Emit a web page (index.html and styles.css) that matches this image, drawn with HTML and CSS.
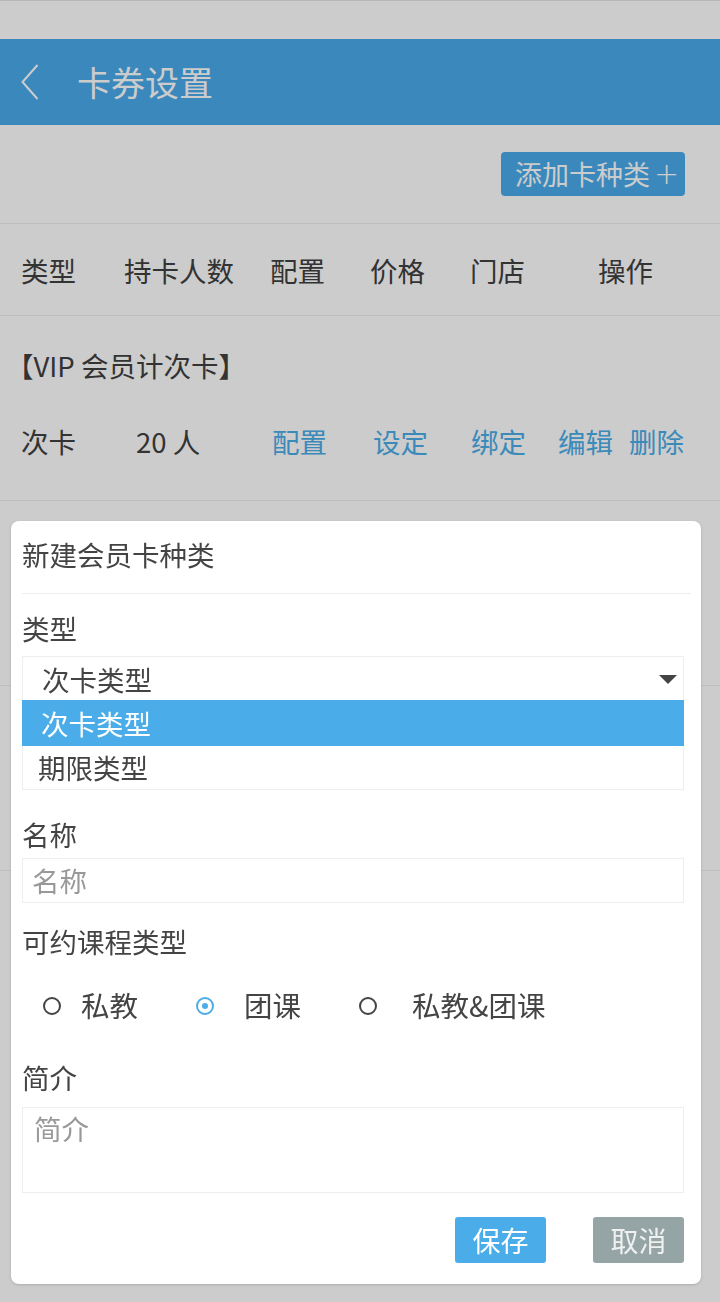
FILE: index.html
```html
<!DOCTYPE html>
<html lang="zh-CN">
<head>
<meta charset="utf-8">
<title>卡券设置</title>
<link rel="stylesheet" href="styles.css">
</head>
<body>
<div class="page">
  <div class="statusbar"></div>
  <header class="navbar">
    <svg class="back" width="18" height="36" viewBox="0 0 18 36"><polyline points="16.5,1 1.5,18 16.5,35" fill="none" stroke="#fff" stroke-width="2"/></svg>
    <h1 class="title">卡券设置</h1>
  </header>
  <div class="toolbar"><button class="btn-add">添加卡种类<span class="plus">+</span></button></div>
  <div class="thead">
    <span>类型</span><span>持卡人数</span><span>配置</span><span>价格</span><span>门店</span><span>操作</span>
  </div>
  <section class="group">
    <div class="group-title">【VIP 会员计次卡】</div>
    <div class="group-row">
      <span>次卡</span><span>20 人</span><a class="link">配置</a><a class="link">设定</a><a class="link">绑定</a><a class="link">编辑</a><a class="link">删除</a>
    </div>
  </section>
  <section class="group"></section>
  <section class="group"></section>
</div>
<div class="mask"></div>
<div class="modal">
  <div class="modal-head">新建会员卡种类</div>
  <div class="modal-body">
    <div class="label label-type">类型</div>
    <div class="select">
      <div class="select-value"><span>次卡类型</span><i class="caret"></i></div>
      <ul class="options">
        <li class="option active">次卡类型</li>
        <li class="option">期限类型</li>
      </ul>
    </div>
    <div class="label label-name">名称</div>
    <div class="input placeholder">名称</div>
    <div class="label label-course">可约课程类型</div>
    <div class="radios">
      <span class="radio r1"><i class="dot"></i><span>私教</span></span>
      <span class="radio r2 checked"><i class="dot"></i><span>团课</span></span>
      <span class="radio r3"><i class="dot"></i><span>私教&amp;团课</span></span>
    </div>
    <div class="label label-intro">简介</div>
    <div class="textarea placeholder">简介</div>
    <div class="actions">
      <button class="btn btn-save">保存</button>
      <button class="btn btn-cancel">取消</button>
    </div>
  </div>
</div>
</body>
</html>
```

FILE: styles.css
```css
* { box-sizing: border-box; }
html, body {
  margin: 0;
  padding: 0;
  background: #fff;
  font-family: "Noto Sans CJK SC", "Noto Sans", sans-serif;
  color: #404040;
}
.page {
  width: 720px;
  min-height: 1302px;
  background: #fff;
}
.statusbar {
  height: 39px;
  border-top: 1px solid #e6e6e6;
  background: #fff;
}
.navbar {
  height: 86px;
  background: #49abeb;
  display: flex;
  align-items: center;
  padding-left: 21px;
}
.back { display: block; }
.title {
  margin: 0 0 0 38px;
  font-weight: normal;
  font-size: 34px;
  color: #fff;
  line-height: 40px;
}
.toolbar {
  height: 99px;
  border-bottom: 1px solid #efefef;
  display: flex;
  justify-content: flex-end;
  align-items: flex-start;
  padding: 27px 35px 0 0;
}
.btn-add {
  height: 44px;
  width: 184px;
  border: 0;
  border-radius: 4px;
  background: #49abeb;
  color: #fff;
  font-family: inherit;
  font-size: 27px;
  line-height: 44px;
  padding: 0 0 0 14px;
  text-align: left;
  white-space: nowrap;
  display: flex;
  align-items: center;
}
.plus {
  margin-left: 4px;
  font-family: "DejaVu Sans", sans-serif;
  font-weight: 200;
  font-size: 30px;
  line-height: 40px;
}
.thead {
  height: 92px;
  border-bottom: 1px solid #efefef;
  display: grid;
  grid-template-columns: 103px 146px 100px 100px 128px auto;
  align-items: center;
  padding-left: 21px;
  font-size: 27.5px;
}
.group {
  height: 185px;
  border-bottom: 1px solid #efefef;
}
.group-title {
  padding: 31px 0 0 6px;
  line-height: 36px;
  font-size: 27.5px;
}
.group-row {
  margin-top: 40px;
  display: grid;
  grid-template-columns: 115px 136px 101px 98px 87px 71px auto;
  padding-left: 21px;
  line-height: 36px;
  font-size: 27.5px;
}
.link { color: #4aade9; }
.mask {
  position: fixed;
  inset: 0;
  background: rgba(0, 0, 0, 0.2);
}
.modal {
  position: absolute;
  left: 11px;
  top: 521px;
  width: 690px;
  background: #fff;
  border-radius: 8px;
  box-shadow: 0 1px 3px rgba(0, 0, 0, 0.15);
  color: #444;
}
.modal-head {
  margin: 0 10px 0 11px;
  padding: 14px 0 20px;
  line-height: 38px;
  font-size: 27.5px;
  border-bottom: 1px solid #eee;
}
.modal-body {
  padding: 0 17px 21px 11px;
  font-size: 27.5px;
}
.label { line-height: 36px; font-size: 27.5px; }
.label-type { margin-top: 16px; }
.label-name { margin-top: 26px; }
.label-course { margin-top: 20px; }
.label-intro { margin-top: 27px; }
.select { margin-top: 10px; }
.select-value {
  height: 44px;
  border: 1px solid #eee;
  border-bottom: 0;
  display: flex;
  align-items: center;
  justify-content: space-between;
  padding: 0 6px 0 19px;
  line-height: 36px;
}
.caret {
  width: 0;
  height: 0;
  border-left: 9px solid transparent;
  border-right: 9px solid transparent;
  border-top: 9px solid #444;
  margin-top: 2px;
}
.options {
  list-style: none;
  margin: 0;
  padding: 0;
  border: 1px solid #eee;
  border-top: 0;
}
.option {
  height: 43px;
  line-height: 43px;
  padding-left: 15px;
}
.option.active {
  height: 46px;
  line-height: 46px;
  background: #4aade9;
  color: #fff;
  padding-left: 19px;
  margin: 0 -1px;
}
.input {
  margin-top: 6px;
  height: 45px;
  border: 1px solid #eee;
  padding-left: 9px;
  line-height: 43px;
}
.placeholder { color: #999; }
.radios {
  margin-top: 17px;
  height: 56px;
  display: flex;
  align-items: center;
  padding-left: 20px;
  font-size: 28.5px;
}
.radio { display: flex; align-items: center; }
.dot {
  width: 18px;
  height: 18px;
  border: 2px solid #444;
  border-radius: 50%;
  display: flex;
  align-items: center;
  justify-content: center;
  margin-top: 4px;
}
.checked .dot { border-color: #4aade9; }
.checked .dot::after {
  content: "";
  width: 6px;
  height: 6px;
  border-radius: 50%;
  background: #4aade9;
}
.r1 .dot { margin-left: 1px; margin-right: 20px; }
.r2 { margin-left: 58px; }
.r2 .dot { margin-right: 30px; }
.r3 { margin-left: 58px; }
.r3 .dot { margin-right: 35px; }
.textarea {
  margin-top: 12px;
  height: 86px;
  border: 1px solid #eee;
  padding: 6px 11px;
  line-height: 28px;
}
.actions {
  margin-top: 24px;
  display: flex;
  justify-content: flex-end;
  gap: 47px;
}
.btn {
  width: 91px;
  height: 46px;
  border: 0;
  border-radius: 3px;
  font-family: inherit;
  font-size: 28px;
  line-height: 46px;
  padding: 0;
  color: #fff;
}
.btn-save { background: #4aade9; }
.btn-cancel { background: #95a5a6; color: #f0f0f0; }
```
